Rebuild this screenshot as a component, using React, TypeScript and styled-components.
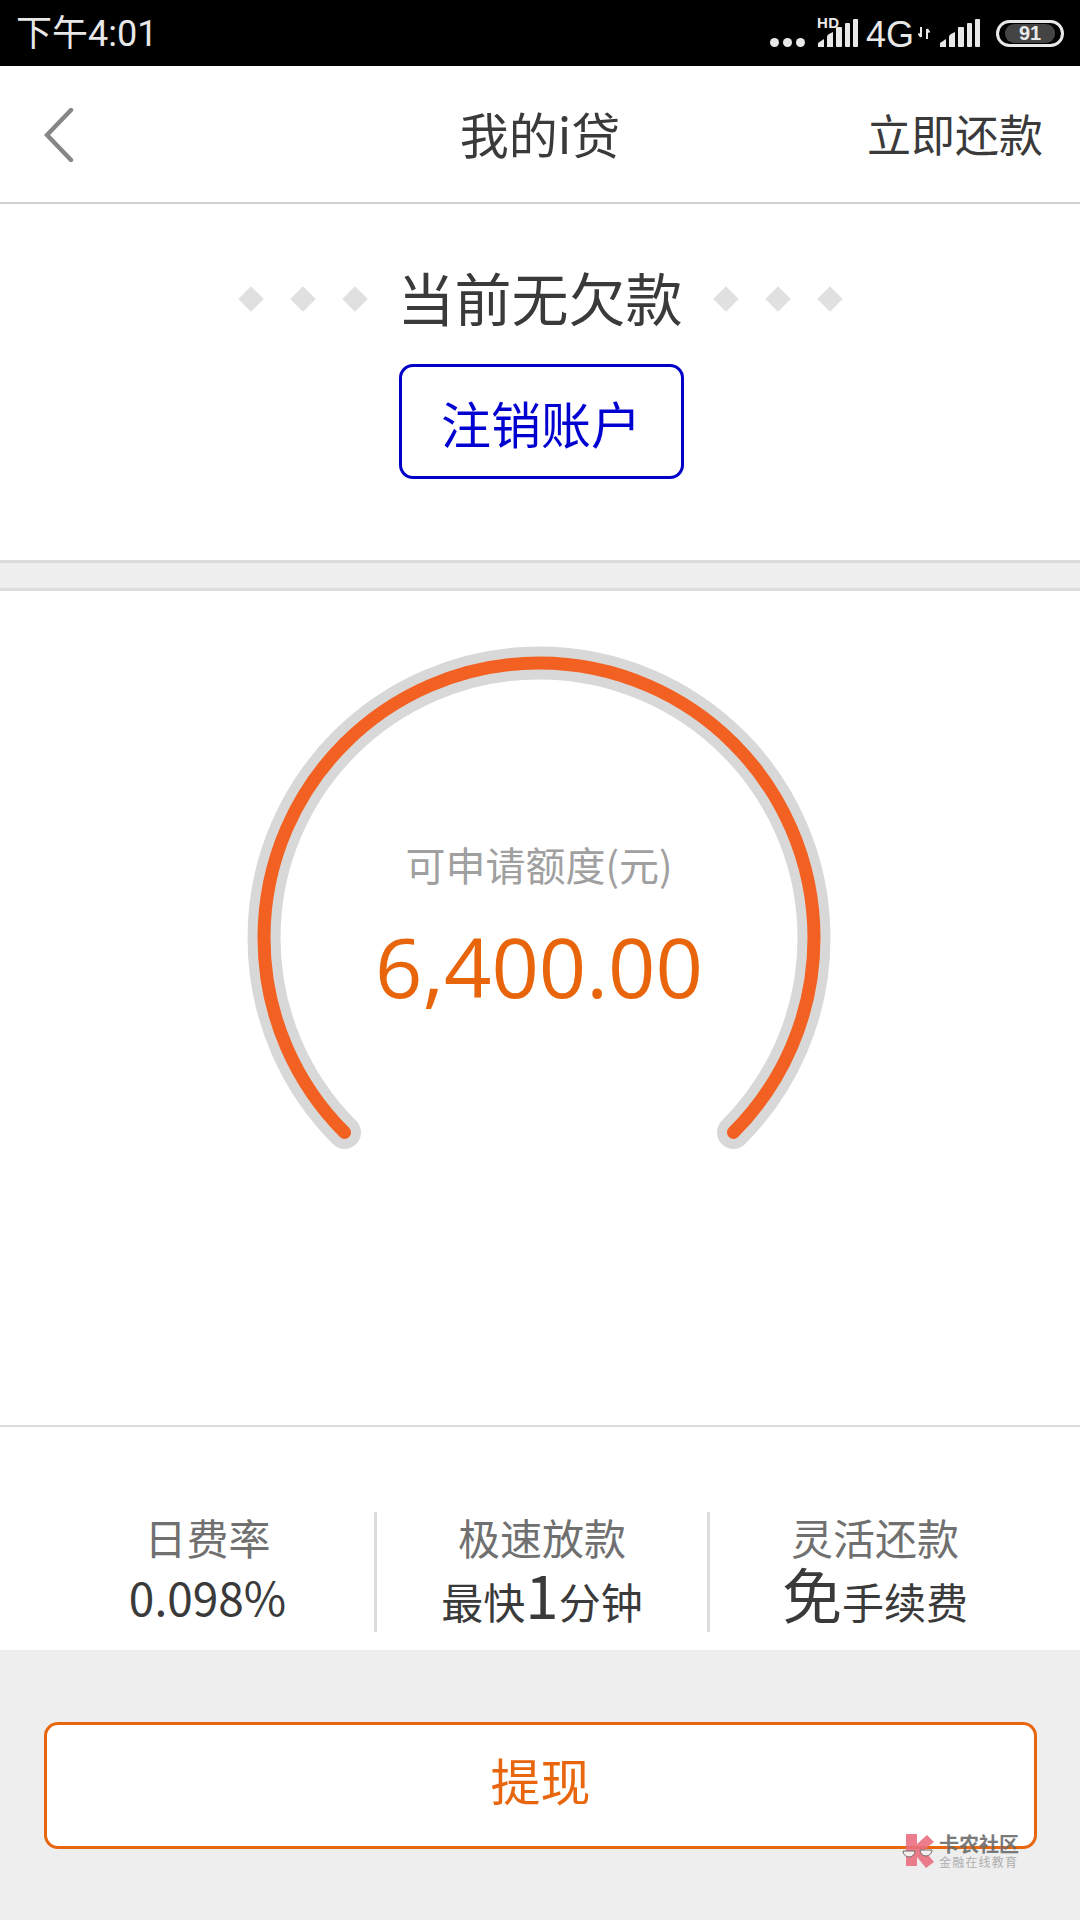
import styled, { createGlobalStyle } from "styled-components"

const CJK = `"Noto Sans CJK SC", "Noto Sans", sans-serif`

const GlobalStyle = createGlobalStyle`
html, body {
    margin: 0;
    padding: 0;
    background: #eeeeee;
}
* {
    box-sizing: border-box;
}
`

const Signal = () => (
    <svg width="40" height="28" viewBox="0 0 40 28">
        <path d="M0 28 V24 L6 20 V28 Z" fill="#e8e8e8" />
        <path d="M9 28 V18 Q9 16 11 15 L15 13 V28 Z" fill="#e8e8e8" />
        <rect x="18" y="8" width="6" height="20" rx="1" fill="#e8e8e8" />
        <rect x="27" y="4" width="5" height="24" rx="1" fill="#e8e8e8" />
        <rect x="35" y="0" width="5" height="28" rx="1" fill="#e8e8e8" />
    </svg>
)

const HomePage = () => {
    return (
        <Page>
            <GlobalStyle />
            <StatusBar>
                <Clock>下午4:01</Clock>
                <StatusIcons>
                    <Dots>
                        <i /><i /><i />
                    </Dots>
                    <HdSignal>
                        <b>HD</b>
                        <Signal />
                    </HdSignal>
                    <Network>4G</Network>
                    <svg width="12" height="12" viewBox="0 0 12 12">
                        <path d="M3 0 V10 M0.5 6.5 L3 10 M9 12 V2 M9 2 L11.5 5.5" stroke="#e8e8e8" strokeWidth="2" fill="none" />
                    </svg>
                    <SignalGap>
                        <Signal />
                    </SignalGap>
                    <Battery>
                        <span>91</span>
                    </Battery>
                </StatusIcons>
            </StatusBar>

            <Header>
                <BackButton>
                    <svg width="30" height="54" viewBox="0 0 30 54">
                        <path d="M27 2 L3 27 L27 52" stroke="#868686" strokeWidth="4.5" fill="none" strokeLinecap="round" />
                    </svg>
                </BackButton>
                <Title>我的i贷</Title>
                <HeaderAction>立即还款</HeaderAction>
            </Header>

            <DebtSection>
                <DebtRow>
                    <Diamonds>
                        <i /><i /><i />
                    </Diamonds>
                    <DebtText>当前无欠款</DebtText>
                    <Diamonds>
                        <i /><i /><i />
                    </Diamonds>
                </DebtRow>
                <CancelButton>注销账户</CancelButton>
            </DebtSection>

            <Spacer />

            <GaugeSection>
                <GaugeWrap>
                    <svg width="584" height="584" viewBox="0 0 584 584">
                        <path d="M97.55 486.45 A275 275 0 1 1 486.45 486.45" stroke="#d8d8d8" strokeWidth="33" fill="none" strokeLinecap="round" />
                        <path d="M97.55 486.45 A275 275 0 1 1 486.45 486.45" stroke="#f26122" strokeWidth="13" fill="none" strokeLinecap="round" />
                    </svg>
                    <GaugeText>
                        <GaugeLabel>可申请额度(元)</GaugeLabel>
                        <GaugeAmount>6,400.00</GaugeAmount>
                    </GaugeText>
                </GaugeWrap>
            </GaugeSection>

            <Stats>
                <Stat>
                    <StatLabel>日费率</StatLabel>
                    <StatValue $rate>0.098%</StatValue>
                </Stat>
                <Stat>
                    <StatLabel>极速放款</StatLabel>
                    <StatValue>最快<Big>1</Big>分钟</StatValue>
                </Stat>
                <Stat>
                    <StatLabel>灵活还款</StatLabel>
                    <StatValue><Big>免</Big>手续费</StatValue>
                </Stat>
            </Stats>

            <Footer>
                <WithdrawButton>提现</WithdrawButton>
                <Watermark>
                    <svg width="32" height="35" viewBox="0 0 32 35">
                        <path d="M4 1 H15 V11 L25 2 L32 9 L22 17 L32 29 L24 35 L15 24 V33 H4 Z" fill="#ea6f80" />
                        <path d="M1 18 A6 6 0 0 0 13 18 Z" fill="#f4f0ee" stroke="#6a5a5a" strokeWidth="1" />
                        <path d="M18 17 A6 6 0 0 0 30 17 Z" fill="#f4f0ee" stroke="#6a5a5a" strokeWidth="1" />
                    </svg>
                    <WatermarkText>
                        <strong>卡农社区</strong>
                        <span>金融在线教育</span>
                    </WatermarkText>
                </Watermark>
            </Footer>
        </Page>
    )
}

const Page = styled.div`
width: 1080px;
height: 1920px;
display: flex;
flex-direction: column;
background-color: #ffffff;
font-family: ${CJK};
overflow: hidden;
`

const StatusBar = styled.div`
height: 66px;
background-color: #000000;
color: #e8e8e8;
display: flex;
align-items: center;
justify-content: space-between;
padding: 0 16px;
`

const Clock = styled.div`
font-family: Roboto, ${CJK};
font-size: 36px;
line-height: 66px;
margin-top: 1px;
`

const StatusIcons = styled.div`
display: flex;
align-items: center;
height: 66px;
`

const Dots = styled.div`
display: flex;
gap: 4px;
margin-top: 18px;
margin-right: 13px;
i {
    width: 9px;
    height: 9px;
    border-radius: 50%;
    background-color: #e8e8e8;
}
`

const HdSignal = styled.div`
position: relative;
height: 28px;
b {
    position: absolute;
    left: -1px;
    top: -3px;
    font-family: "Liberation Sans", sans-serif;
    font-size: 15px;
    line-height: 14px;
    letter-spacing: 0.5px;
}
`

const Network = styled.div`
font-family: "Liberation Sans", sans-serif;
font-size: 36px;
line-height: 33px;
margin: 2px 4px 0 8px;
`

const SignalGap = styled.div`
margin-left: 10px;
height: 28px;
`

const Battery = styled.div`
width: 68px;
height: 27px;
margin-left: 16px;
border: 3px solid #e8e8e8;
border-radius: 14px;
padding: 1px 6px;
span {
    display: block;
    height: 19px;
    border-radius: 9px;
    background-color: #444444;
    font-family: "Liberation Sans", sans-serif;
    font-size: 20px;
    font-weight: 700;
    line-height: 19px;
    text-align: center;
}
`

const Header = styled.div`
height: 138px;
display: grid;
grid-template-columns: 1fr auto 1fr;
align-items: center;
padding: 2px 37px 0;
border-bottom: 2px solid #cfcfcf;
color: #3a3a3a;
`

const BackButton = styled.div`
display: flex;
align-items: center;
padding-left: 7px;
`

const Title = styled.div`
font-size: 49px;
line-height: 60px;
margin-top: -4px;
`

const HeaderAction = styled.div`
font-size: 44px;
line-height: 60px;
margin-top: -4px;
text-align: right;
`

const DebtSection = styled.div`
height: 356px;
display: flex;
flex-direction: column;
align-items: center;
padding-top: 54px;
`

const DebtRow = styled.div`
display: flex;
align-items: center;
gap: 34px;
height: 76px;
`

const Diamonds = styled.div`
display: flex;
gap: 34px;
margin-top: 5px;
i {
    width: 18px;
    height: 18px;
    transform: rotate(45deg);
    background-color: #e0e0e0;
}
`

const DebtText = styled.div`
font-size: 57px;
line-height: 76px;
color: #3a3a3a;
`

const CancelButton = styled.div`
width: 285px;
height: 115px;
margin: 30px 0 0 2px;
border: 3px solid #0000c8;
border-radius: 14px;
display: flex;
align-items: center;
justify-content: center;
color: #0000d0;
font-size: 50px;
`

const Spacer = styled.div`
height: 31px;
background-color: #eeeeee;
border-top: 3px solid #dcdcdc;
border-bottom: 3px solid #dcdcdc;
`

const GaugeSection = styled.div`
height: 836px;
padding-top: 55px;
display: flex;
justify-content: center;
border-bottom: 2px solid #dcdcdc;
`

const GaugeWrap = styled.div`
display: grid;
width: 584px;
height: 584px;
margin-right: 2px;
> * {
    grid-area: 1 / 1;
}
`

const GaugeText = styled.div`
display: flex;
flex-direction: column;
align-items: center;
padding-top: 193px;
`

const GaugeLabel = styled.div`
font-size: 40px;
line-height: 50px;
color: #a0a0a0;
`

const GaugeAmount = styled.div`
font-family: "Open Sans", sans-serif;
font-size: 83px;
line-height: 100px;
margin-top: 27px;
color: #e8650c;
`

const Stats = styled.div`
height: 223px;
display: grid;
grid-template-columns: repeat(3, 333px);
padding: 85px 39px 20px 41px;
background-color: #ffffff;
`

const Stat = styled.div`
display: flex;
flex-direction: column;
align-items: center;
border-left: 3px solid #dcdcdc;
&:first-child {
    border-left: none;
}
`

const StatLabel = styled.div`
font-size: 42px;
line-height: 50px;
color: #707070;
`

const StatValue = styled.div<{ $rate?: boolean }>`
display: flex;
align-items: baseline;
font-size: ${p => (p.$rate ? "46px" : "42px")};
line-height: 62px;
margin-top: ${p => (p.$rate ? "3px" : "1px")};
color: #3a3a3a;
`

const Big = styled.span`
font-size: 60px;
line-height: 60px;
`

const Footer = styled.div`
position: relative;
flex: 1;
background-color: #eeeeee;
padding: 72px 43px 0 44px;
`

const WithdrawButton = styled.div`
height: 127px;
background-color: #ffffff;
border: 3px solid #e8660e;
border-radius: 14px;
display: flex;
align-items: center;
justify-content: center;
padding-bottom: 14px;
font-size: 50px;
color: #e8660e;
`

const Watermark = styled.div`
position: absolute;
left: 902px;
top: 183px;
display: flex;
gap: 5px;
opacity: 0.9;
`

const WatermarkText = styled.div`
display: flex;
flex-direction: column;
strong {
    font-size: 20px;
    line-height: 22px;
    color: #6c6c6c;
}
span {
    font-size: 12px;
    line-height: 14px;
    letter-spacing: 1.2px;
    color: #a8a8a8;
}
`

export default HomePage
